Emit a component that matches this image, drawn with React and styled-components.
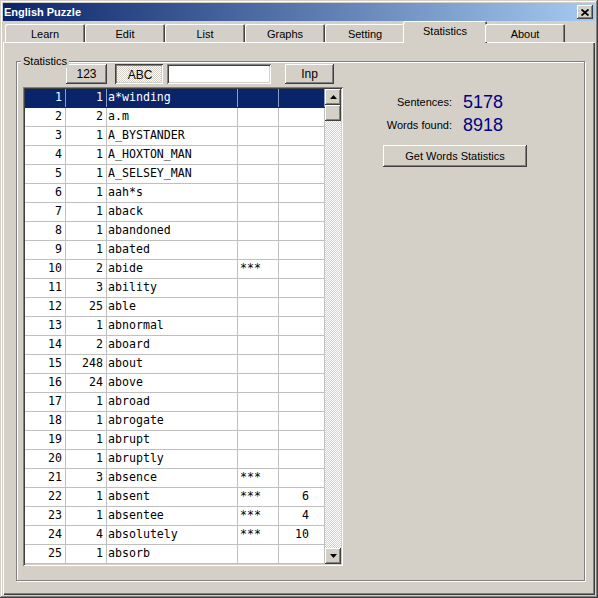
import React from 'react'
import styled, { createGlobalStyle, css } from 'styled-components'

const face = '#d4d0c8'

const GlobalStyle = createGlobalStyle`
    html, body {
        margin: 0;
        padding: 0;
        background: ${face};
    }
    body {
        font-family: "Liberation Sans", Arial, sans-serif;
        font-size: 11px;
        color: #000;
    }
    * {
        box-sizing: border-box;
    }
`

const raised = css`
    box-shadow: inset -1px -1px #404040, inset 1px 1px #fff,
        inset -2px -2px #808080, inset 2px 2px ${face};
`

const sunken = css`
    box-shadow: inset 1px 1px #808080, inset -1px -1px #fff,
        inset 2px 2px #404040, inset -2px -2px ${face};
`

const checkered = css`
    background: repeating-conic-gradient(${face} 0 25%, #fff 0 50%) 0 0 / 2px 2px;
`

const Window = styled.div`
    width: 598px;
    height: 598px;
    padding: 3px;
    display: flex;
    flex-direction: column;
    background: ${face};
    box-shadow: inset -1px -1px #404040, inset 1px 1px ${face},
        inset -2px -2px #808080, inset 2px 2px #fff;
`

const TitleBar = styled.div`
    flex: none;
    height: 18px;
    display: flex;
    align-items: center;
    justify-content: space-between;
    padding: 0 2px 0 1px;
    background: linear-gradient(to right, #0a246a, #a6caf0);
`

const Title = styled.span`
    color: #fff;
    font-weight: bold;
    font-size: 11px;
`

const CloseButton = styled.div`
    width: 16px;
    height: 14px;
    display: flex;
    align-items: center;
    justify-content: center;
    background: ${face};
    ${raised};
`

const TabStrip = styled.div`
    flex: none;
    height: 22px;
    display: flex;
    align-items: flex-start;
    padding-left: 2px;
    position: relative;
    z-index: 1;
`

const Tab = styled.div`
    width: 80px;
    height: 18px;
    margin-top: 3px;
    display: flex;
    align-items: center;
    justify-content: center;
    padding-top: 1px;
    background: ${face};
    box-shadow: inset 1px 1px #fff, inset -1px 0 #404040, inset -2px 0 #808080;
    border-radius: 2px 2px 0 0;

    ${props => props.$active && css`
        width: 84px;
        height: 22px;
        margin: 0 -2px;
        padding-top: 0;
        padding-bottom: 2px;
    `}
`

const Panel = styled.div`
    flex: 1;
    margin-top: -1px;
    display: flex;
    padding: 19px 10px 14px 13px;
    background: ${face};
    box-shadow: inset 1px 1px #fff, inset -1px -1px #404040, inset -2px -2px #808080;
`

const Group = styled.div`
    flex: 1;
    position: relative;
    display: flex;
    align-items: flex-start;
    padding: 2px 6px;
    border: 1px solid #808080;
    box-shadow: inset 1px 1px #fff, 1px 1px #fff;
`

const Legend = styled.span`
    position: absolute;
    top: -7px;
    left: 4px;
    padding: 0 2px;
    line-height: 13px;
    background: ${face};
`

const LeftCol = styled.div`
    display: flex;
    flex-direction: column;
    gap: 3px;
`

const Toolbar = styled.div`
    height: 20px;
    display: flex;
    font-size: 12px;
`

const Button = styled.div`
    width: ${props => props.$w}px;
    height: ${props => props.$h || 20}px;
    margin-left: ${props => props.$ml || 0}px;
    margin-top: ${props => props.$mt || 0}px;
    display: flex;
    align-items: center;
    justify-content: center;
    background: ${face};
    ${raised};

    ${props => props.$pressed && css`
        ${checkered};
        box-shadow: inset 1px 1px #404040, inset -1px -1px #fff,
            inset 2px 2px #808080, inset -2px -2px ${face};
        padding: 2px 0 0 2px;
    `}
`

const TextBox = styled.div`
    width: 104px;
    height: 20px;
    margin-left: 4px;
    background: #fff;
    ${sunken};
`

const GridFrame = styled.div`
    width: 320px;
    height: 479px;
    padding: 2px;
    display: flex;
    background: #fff;
    ${sunken};
`

const Rows = styled.div`
    width: 300px;
    display: flex;
    flex-direction: column;
    font-family: "DejaVu Sans Mono", "Liberation Mono", monospace;
    font-size: 11.6px;
`

const Row = styled.div`
    height: 19px;
    display: grid;
    grid-template-columns: 41px 41px 131px 41px 46px;
    background: ${props => (props.$selected ? '#0a246a' : '#fff')};
    color: ${props => (props.$selected ? '#fff' : '#000')};
    --line: ${props => (props.$selected ? '#8a9cc8' : '#c0c0c0')};
    border-bottom: 1px solid ${props => (props.$selected ? '#0a246a' : '#c0c0c0')};
`

const Cell = styled.div`
    display: flex;
    align-items: center;
    justify-content: ${props => (props.$right ? 'flex-end' : 'flex-start')};
    padding: ${props => props.$pad || '0 3px 0 2px'};
    padding-bottom: 2px;
    border-right: 1px solid var(--line);
    white-space: pre;
    overflow: hidden;
`

const ScrollBar = styled.div`
    width: 16px;
    display: flex;
    flex-direction: column;
`

const ScrollButton = styled.div`
    width: 16px;
    height: 16px;
    flex: none;
    display: flex;
    align-items: center;
    justify-content: center;
    background: ${face};
    ${raised};
`

const Track = styled.div`
    flex: 1;
    ${checkered};
`

const Side = styled.div`
    padding-top: 26px;
    display: flex;
    flex-direction: column;
`

const Stats = styled.div`
    display: grid;
    grid-template-columns: 109px auto;
    grid-auto-rows: 23px;
    column-gap: 11px;
    align-items: center;
`

const StatLabel = styled.span`
    text-align: right;
`

const StatValue = styled.span`
    color: #000080;
    font-size: 18px;
    line-height: 20px;
`

const Arrow = ({ down }) => (
    <svg width="7" height="4" viewBox="0 0 7 4">
        <polygon points={down ? '0,0 7,0 3.5,4' : '3.5,0 7,4 0,4'} fill="#000"/>
    </svg>
)

const CloseGlyph = () => (
    <svg width="8" height="7" viewBox="0 0 8 7">
        <path d="M0.5 0.5 L7.5 6.5 M7.5 0.5 L0.5 6.5" stroke="#000" strokeWidth="1.8"/>
    </svg>
)

const tabs = ['Learn', 'Edit', 'List', 'Graphs', 'Setting', 'Statistics', 'About']

const words = [
    [1, 'a*winding'],
    [2, 'a.m'],
    [1, 'A_BYSTANDER'],
    [1, 'A_HOXTON_MAN'],
    [1, 'A_SELSEY_MAN'],
    [1, 'aah*s'],
    [1, 'aback'],
    [1, 'abandoned'],
    [1, 'abated'],
    [2, 'abide', '***'],
    [3, 'ability'],
    [25, 'able'],
    [1, 'abnormal'],
    [2, 'aboard'],
    [248, 'about'],
    [24, 'above'],
    [1, 'abroad'],
    [1, 'abrogate'],
    [1, 'abrupt'],
    [1, 'abruptly'],
    [3, 'absence', '***'],
    [1, 'absent', '***', 6],
    [1, 'absentee', '***', 4],
    [4, 'absolutely', '***', 10],
    [1, 'absorb'],
]

const App = () => (
    <>
        <GlobalStyle/>
        <Window>
            <TitleBar>
                <Title>English Puzzle</Title>
                <CloseButton><CloseGlyph/></CloseButton>
            </TitleBar>
            <TabStrip>
                {tabs.map(name => (
                    <Tab key={name} $active={name === 'Statistics'}>{name}</Tab>
                ))}
            </TabStrip>
            <Panel>
                <Group>
                    <Legend>Statistics</Legend>
                    <LeftCol>
                        <Toolbar>
                            <Button $w={41} $ml={43}>123</Button>
                            <Button $w={48} $ml={8} $pressed>ABC</Button>
                            <TextBox/>
                            <Button $w={49} $ml={14}>Inp</Button>
                        </Toolbar>
                        <GridFrame>
                            <Rows>
                                {words.map(([count, word, mark, extra], i) => (
                                    <Row key={i} $selected={i === 0}>
                                        <Cell $right>{i + 1}</Cell>
                                        <Cell $right>{count}</Cell>
                                        <Cell $pad="0 2px 0 1px">{word}</Cell>
                                        <Cell>{mark || ''}</Cell>
                                        <Cell $right $pad="0 15px 0 2px">{extra || ''}</Cell>
                                    </Row>
                                ))}
                            </Rows>
                            <ScrollBar>
                                <ScrollButton><Arrow/></ScrollButton>
                                <ScrollButton/>
                                <Track/>
                                <ScrollButton><Arrow down/></ScrollButton>
                            </ScrollBar>
                        </GridFrame>
                    </LeftCol>
                    <Side>
                        <Stats>
                            <StatLabel>Sentences:</StatLabel>
                            <StatValue>5178</StatValue>
                            <StatLabel>Words found:</StatLabel>
                            <StatValue>8918</StatValue>
                        </Stats>
                        <Button $w={144} $h={22} $ml={40} $mt={9}>Get Words Statistics</Button>
                    </Side>
                </Group>
            </Panel>
        </Window>
    </>
)

export default App
